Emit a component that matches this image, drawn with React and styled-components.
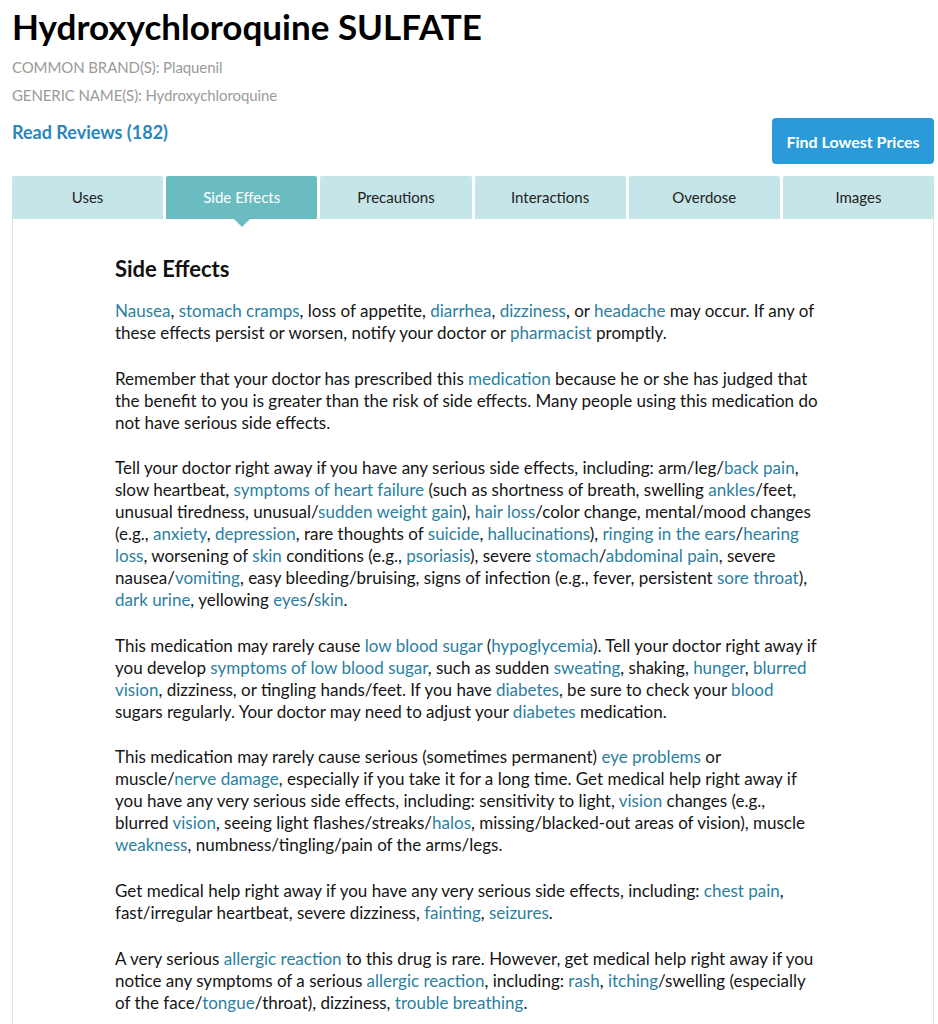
import styled, { createGlobalStyle } from 'styled-components';

const GlobalStyle = createGlobalStyle`
  body {
    margin: 0;
    background: #fff;
    font-family: Lato, "Liberation Sans", sans-serif;
    color: #151515;
  }
`;

const Page = styled.div`
  padding: 4px 4px 0 12px;
`;

const Title = styled.h1`
  margin: 0;
  font-size: 35px;
  line-height: 44px;
  font-weight: 700;
  color: #000;
`;

const MetaBlock = styled.div`
  margin-top: 5px;
`;

const Meta = styled.div`
  font-size: 15px;
  line-height: 28px;
  color: #9a9a9a;
  letter-spacing: -0.1px;
`;

const ActionRow = styled.div`
  display: flex;
  justify-content: space-between;
  align-items: flex-start;
  margin-top: 9px;
`;

const ReviewsLink = styled.a`
  font-size: 18px;
  font-weight: 700;
  color: #2a86bd;
  text-decoration: none;
  line-height: 28px;
`;

const PriceButton = styled.button`
  width: 162px;
  height: 46px;
  border: none;
  border-radius: 4px;
  background: #2b9ad9;
  color: #fff;
  font-family: inherit;
  font-size: 16px;
  font-weight: 700;
  cursor: pointer;
`;

const Tabs = styled.div`
  display: grid;
  grid-template-columns: repeat(6, 1fr);
  gap: 3px;
  margin-top: 12px;
`;

const Tab = styled.div`
  position: relative;
  height: 43px;
  padding-bottom: 1px;
  box-sizing: border-box;
  display: flex;
  align-items: center;
  justify-content: center;
  font-size: 15px;
  border-radius: 2px 2px 0 0;
  background: ${(p) => (p.$active ? '#6bbcc1' : '#c6e5e9')};
  color: ${(p) => (p.$active ? '#fff' : '#222')};

  &::after {
    content: '';
    display: ${(p) => (p.$active ? 'block' : 'none')};
    position: absolute;
    left: 50%;
    bottom: -8px;
    margin-left: -8px;
    border-left: 8px solid transparent;
    border-right: 8px solid transparent;
    border-top: 8px solid #6bbcc1;
  }
`;

const Panel = styled.div`
  border: 1px solid #e2e2e2;
  border-top: none;
  padding: 36px 0 40px;
`;

const Content = styled.div`
  width: 716px;
  margin: 0 auto;
`;

const Heading = styled.h2`
  margin: 0 0 17px;
  font-size: 22px;
  line-height: 28px;
  font-weight: 700;
  color: #111;
`;

const Para = styled.p`
  margin: 0 0 23.6px;
  font-size: 17px;
  line-height: 22px;
  white-space: nowrap;
  color: #151515;
`;

const L = styled.a`
  color: #2b7fa0;
  text-decoration: none;
`;

const tabs = ['Uses', 'Side Effects', 'Precautions', 'Interactions', 'Overdose', 'Images'];

const App = () => {
  return (
    <Page>
      <GlobalStyle />
      <Title>Hydroxychloroquine SULFATE</Title>
      <MetaBlock>
        <Meta>COMMON BRAND(S): Plaquenil</Meta>
        <Meta>GENERIC NAME(S): Hydroxychloroquine</Meta>
      </MetaBlock>
      <ActionRow>
        <ReviewsLink href="#">Read Reviews (182)</ReviewsLink>
        <PriceButton>Find Lowest Prices</PriceButton>
      </ActionRow>
      <Tabs>
        {tabs.map((t) => (
          <Tab key={t} $active={t === 'Side Effects'}>
            {t}
          </Tab>
        ))}
      </Tabs>
      <Panel>
        <Content>
          <Heading>Side Effects</Heading>
          <Para>
            <L href="#">Nausea</L>, <L href="#">stomach cramps</L>, loss of appetite, <L href="#">diarrhea</L>,{' '}
            <L href="#">dizziness</L>, or <L href="#">headache</L> may occur. If any of
            <br />
            these effects persist or worsen, notify your doctor or <L href="#">pharmacist</L> promptly.
          </Para>
          <Para>
            Remember that your doctor has prescribed this <L href="#">medication</L> because he or she has judged
            that
            <br />
            the benefit to you is greater than the risk of side effects. Many people using this medication do
            <br />
            not have serious side effects.
          </Para>
          <Para>
            Tell your doctor right away if you have any serious side effects, including: arm/leg/
            <L href="#">back pain</L>,
            <br />
            slow heartbeat, <L href="#">symptoms of heart failure</L> (such as shortness of breath, swelling{' '}
            <L href="#">ankles</L>/feet,
            <br />
            unusual tiredness, unusual/<L href="#">sudden weight gain</L>), <L href="#">hair loss</L>/color change,
            mental/mood changes
            <br />
            (e.g., <L href="#">anxiety</L>, <L href="#">depression</L>, rare thoughts of <L href="#">suicide</L>,{' '}
            <L href="#">hallucinations</L>), <L href="#">ringing in the ears</L>/
            <L href="#">
              hearing
              <br />
              loss
            </L>
            , worsening of <L href="#">skin</L> conditions (e.g., <L href="#">psoriasis</L>), severe{' '}
            <L href="#">stomach</L>/<L href="#">abdominal pain</L>, severe
            <br />
            nausea/<L href="#">vomiting</L>, easy bleeding/bruising, signs of infection (e.g., fever, persistent{' '}
            <L href="#">sore throat</L>),
            <br />
            <L href="#">dark urine</L>, yellowing <L href="#">eyes</L>/<L href="#">skin</L>.
          </Para>
          <Para>
            This medication may rarely cause <L href="#">low blood sugar</L> (<L href="#">hypoglycemia</L>). Tell
            your doctor right away if
            <br />
            you develop <L href="#">symptoms of low blood sugar</L>, such as sudden <L href="#">sweating</L>,
            shaking, <L href="#">hunger</L>,{' '}
            <L href="#">
              blurred
              <br />
              vision
            </L>
            , dizziness, or tingling hands/feet. If you have <L href="#">diabetes</L>, be sure to check your{' '}
            <L href="#">blood</L>
            <br />
            sugars regularly. Your doctor may need to adjust your <L href="#">diabetes</L> medication.
          </Para>
          <Para>
            This medication may rarely cause serious (sometimes permanent) <L href="#">eye problems</L> or
            <br />
            muscle/<L href="#">nerve damage</L>, especially if you take it for a long time. Get medical help right
            away if
            <br />
            you have any very serious side effects, including: sensitivity to light, <L href="#">vision</L> changes
            (e.g.,
            <br />
            blurred <L href="#">vision</L>, seeing light flashes/streaks/<L href="#">halos</L>, missing/blacked-out
            areas of vision), muscle
            <br />
            <L href="#">weakness</L>, numbness/tingling/pain of the arms/legs.
          </Para>
          <Para>
            Get medical help right away if you have any very serious side effects, including:{' '}
            <L href="#">chest pain</L>,
            <br />
            fast/irregular heartbeat, severe dizziness, <L href="#">fainting</L>, <L href="#">seizures</L>.
          </Para>
          <Para>
            A very serious <L href="#">allergic reaction</L> to this drug is rare. However, get medical help right
            away if you
            <br />
            notice any symptoms of a serious <L href="#">allergic reaction</L>, including: <L href="#">rash</L>,{' '}
            <L href="#">itching</L>/swelling (especially
            <br />
            of the face/<L href="#">tongue</L>/throat), dizziness, <L href="#">trouble breathing</L>.
          </Para>
        </Content>
      </Panel>
    </Page>
  );
};

export default App;
